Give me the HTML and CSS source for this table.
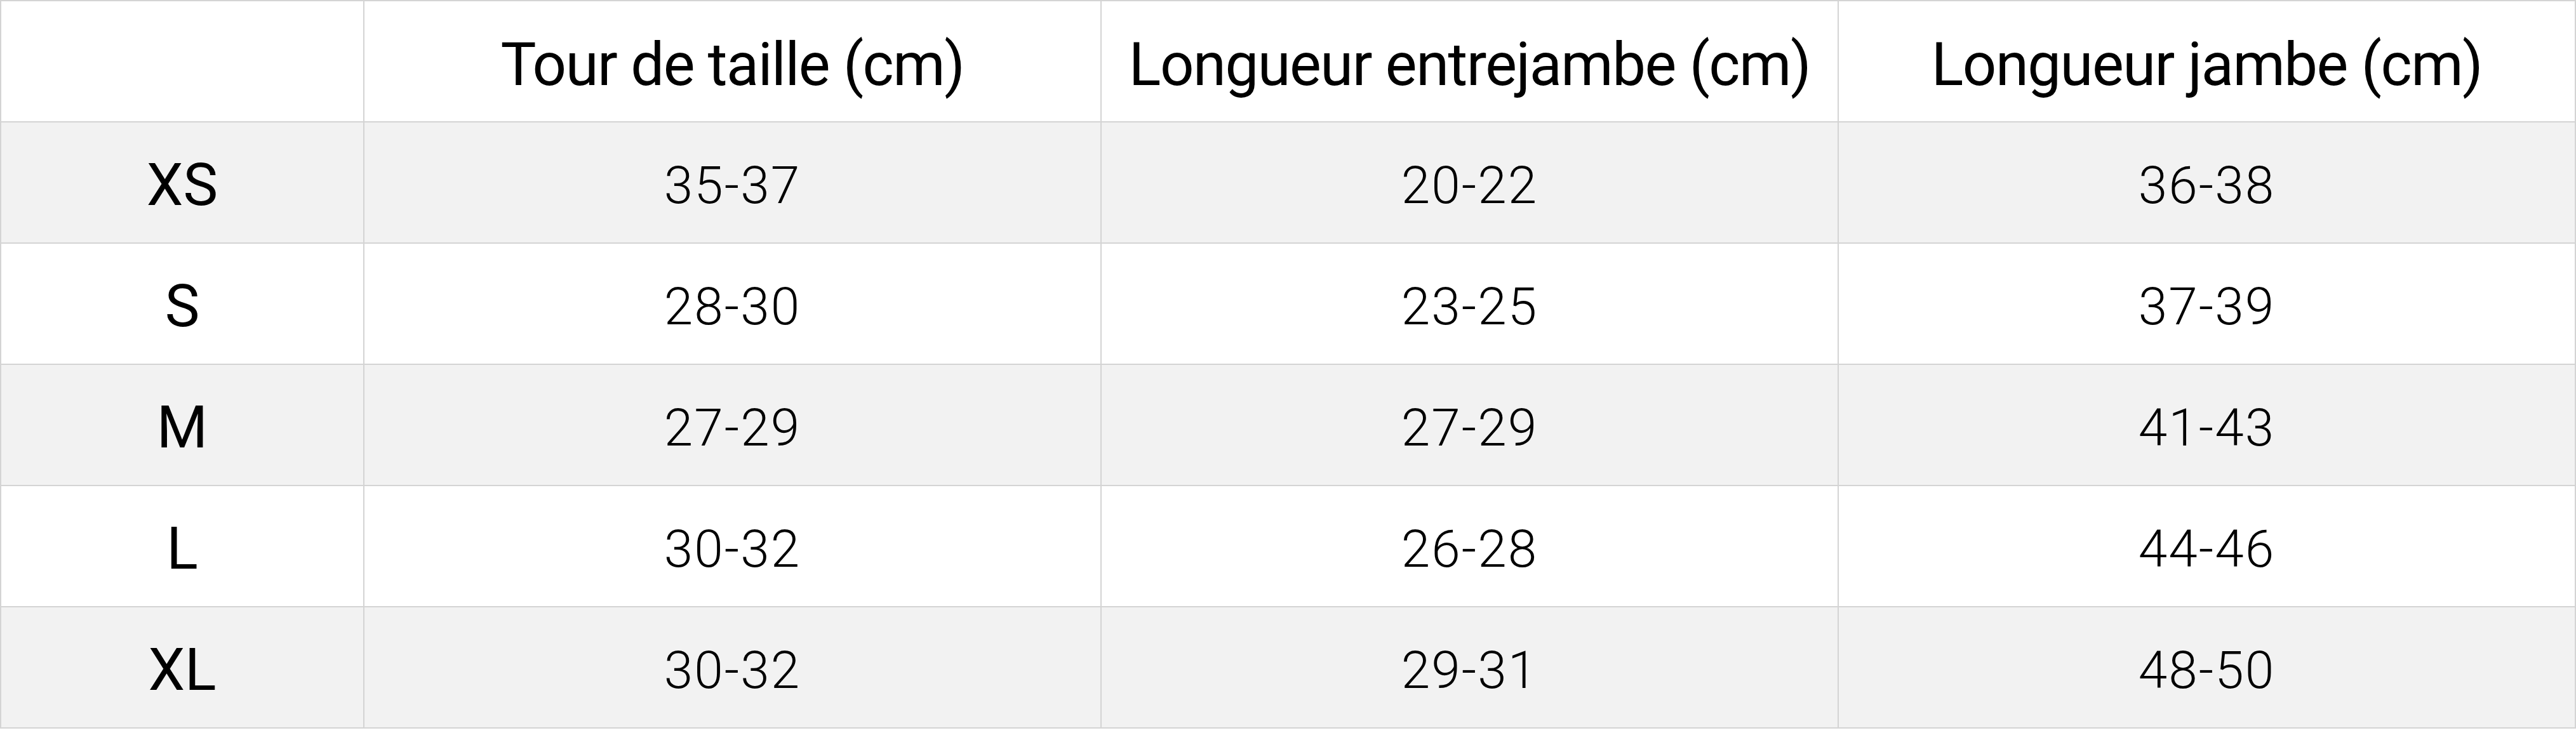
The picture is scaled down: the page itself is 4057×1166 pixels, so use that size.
FILE: index.html
```html
<!DOCTYPE html>
<html lang="fr">
<head>
<meta charset="utf-8">
<title>Guide des tailles</title>
<link rel="stylesheet" href="styles.css">
</head>
<body>
<table class="size-table">
  <colgroup>
    <col class="col-size">
    <col class="col-data">
    <col class="col-data">
    <col class="col-data">
  </colgroup>
  <thead>
    <tr class="row head">
      <th class="cell corner"></th>
      <th class="cell title">Tour de taille (cm)</th>
      <th class="cell title">Longueur entrejambe (cm)</th>
      <th class="cell title">Longueur jambe (cm)</th>
    </tr>
  </thead>
  <tbody>
    <tr class="row odd">
      <th class="cell size">XS</th>
      <td class="cell num">35-37</td>
      <td class="cell num">20-22</td>
      <td class="cell num">36-38</td>
    </tr>
    <tr class="row even">
      <th class="cell size">S</th>
      <td class="cell num">28-30</td>
      <td class="cell num">23-25</td>
      <td class="cell num">37-39</td>
    </tr>
    <tr class="row odd">
      <th class="cell size">M</th>
      <td class="cell num">27-29</td>
      <td class="cell num">27-29</td>
      <td class="cell num">41-43</td>
    </tr>
    <tr class="row even">
      <th class="cell size">L</th>
      <td class="cell num">30-32</td>
      <td class="cell num">26-28</td>
      <td class="cell num">44-46</td>
    </tr>
    <tr class="row odd">
      <th class="cell size">XL</th>
      <td class="cell num">30-32</td>
      <td class="cell num">29-31</td>
      <td class="cell num">48-50</td>
    </tr>
  </tbody>
</table>
</body>
</html>
```

FILE: styles.css
```css
html, body {
  margin: 0;
  padding: 0;
  background: #ffffff;
}

body {
  font-family: Roboto, "Liberation Sans", Arial, sans-serif;
  color: #000000;
}

.size-table {
  width: 4055px;
  border-collapse: collapse;
  table-layout: fixed;
}

.col-size {
  width: 572px;
}

.col-data {
  width: 1161px;
}

.row {
  height: 191px;
}

.row.head,
.row.even {
  background: #ffffff;
}

.row.odd {
  background: #f2f2f2;
}

.cell {
  border: 2px solid #d4d4d4;
  padding: 8px 0 0;
  text-align: center;
  vertical-align: middle;
  font-weight: 400;
}

.title {
  padding-top: 10px;
  font-size: 94px;
  font-weight: 400;
  letter-spacing: -1.5px;
}

.size {
  font-size: 92px;
  font-weight: 400;
}

.num {
  font-size: 82px;
  font-weight: 300;
  letter-spacing: 2px;
}
```
